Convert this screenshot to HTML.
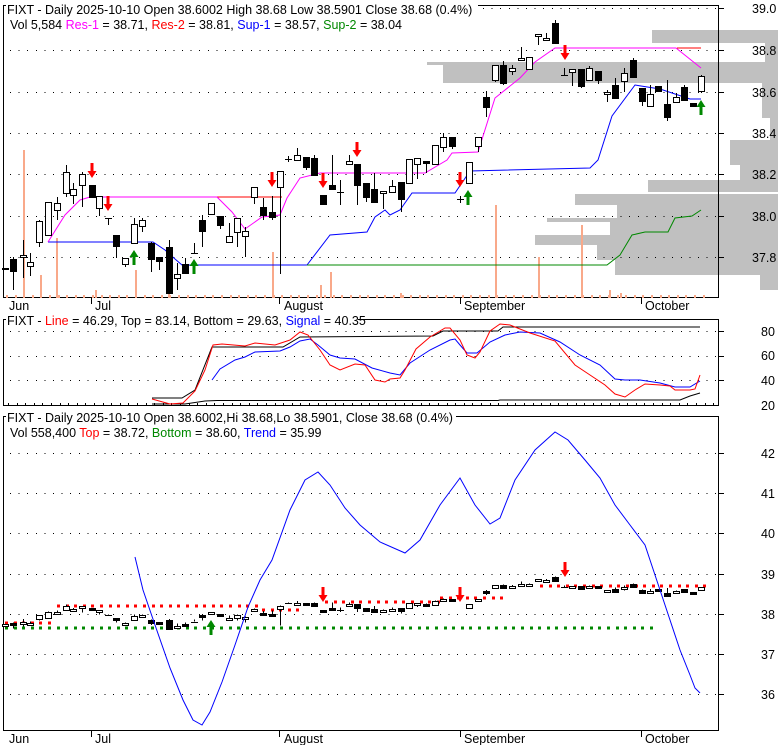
<!DOCTYPE html>
<html><head><meta charset="utf-8"><style>
body{margin:0;background:#fff;width:780px;height:745px;overflow:hidden}
svg{display:block}
text{font-family:"Liberation Sans",Arial,sans-serif;font-size:12.5px}
</style></head><body>
<svg id="s" width="780" height="745" viewBox="0 0 780 745" xmlns="http://www.w3.org/2000/svg" shape-rendering="crispEdges">
<g id="bg"></g>
<!-- frames -->
<rect x="3.5" y="5.5" width="715" height="292" fill="none" stroke="#000"/>
<rect x="3.5" y="319.5" width="715" height="86" fill="none" stroke="#000"/>
<rect x="3.5" y="416.5" width="715" height="314" fill="none" stroke="#000"/>
<g id="g"></g>
<!-- headers -->
<rect x="6" y="0" width="472" height="13" fill="#fff"/>
<text x="7" y="14">FIXT - Daily 2025-10-10 Open 38.6002  High 38.68  Low 38.5901  Close 38.68 (0.4%)</text>
<text x="10" y="29">Vol 5,584 <tspan fill="#f0f">Res-1</tspan> = 38.71, <tspan fill="#f00">Res-2</tspan> = 38.81, <tspan fill="#00f">Sup-1</tspan> = 38.57, <tspan fill="#080">Sup-2</tspan> = 38.04</text>
<rect x="6" y="313" width="352" height="13" fill="#fff"/>
<text x="7" y="325">FIXT - <tspan fill="#f00">Line</tspan> = 46.29, Top = 83.14, Bottom = 29.63, <tspan fill="#00f">Signal</tspan> = 40.35</text>
<rect x="6" y="410" width="450" height="13" fill="#fff"/>
<text x="7" y="422">FIXT - Daily 2025-10-10 Open 38.6002,Hi 38.68,Lo 38.5901, Close 38.68 (0.4%)</text>
<text x="10" y="437">Vol 558,400 <tspan fill="#f00">Top</tspan> = 38.72, <tspan fill="#080">Bottom</tspan> = 38.60, <tspan fill="#00f">Trend</tspan> = 35.99</text>
<!-- axis labels -->
<g font-size="12.5">
<text x="752" y="13">39.0</text><text x="752" y="55">38.8</text><text x="752" y="97">38.6</text><text x="752" y="138">38.4</text><text x="752" y="179">38.2</text><text x="752" y="221">38.0</text><text x="752" y="262">37.8</text>
<text x="761" y="336">80</text><text x="761" y="360">60</text><text x="761" y="385">40</text><text x="761" y="410">20</text>
<text x="761" y="458">42</text><text x="761" y="498">41</text><text x="761" y="538">40</text><text x="761" y="579">39</text><text x="761" y="619">38</text><text x="761" y="659">37</text><text x="761" y="699">36</text>
<text x="9" y="310">Jun</text><text x="95" y="310">Jul</text><text x="284" y="310">August</text><text x="464" y="310">September</text><text x="645" y="310">October</text>
<text x="9" y="743">Jun</text><text x="95" y="743">Jul</text><text x="284" y="743">August</text><text x="464" y="743">September</text><text x="645" y="743">October</text>
</g>
</svg>
<script>
var NS="http://www.w3.org/2000/svg",G=document.getElementById('g'),B=document.getElementById('bg');
function el(p,t,a){var e=document.createElementNS(NS,t);for(var k in a)e.setAttribute(k,a[k]);p.appendChild(e);return e;}
// volume profile
[[30,43,652],[43,62,765],[62,65,427],[65,83,443],[83,118,762],[118,140,770],[140,165,730],[165,180,740],[180,192,648],[194,205,575],[205,218,617],[218,222,547],[222,235,610],[235,245,535],[245,260,597],[260,275,615],[275,290,760]].forEach(function(r){el(B,'rect',{x:r[2],y:r[0],width:778-r[2],height:r[1]-r[0],fill:'#c0c0c0'});});
// grids
function grid(ys){ys.forEach(function(y){el(G,'line',{x1:10,x2:719,y1:y+.5,y2:y+.5,stroke:'#000','stroke-dasharray':'1 7.6'});el(G,'line',{x1:719,x2:724,y1:y+.5,y2:y+.5,stroke:'#000'});});}
grid([8,50,92,133,174,216,257]);grid([331,356,380]);grid([453,493,533,574,614,654,694]);
[91,279,460,641].forEach(function(x){el(G,'line',{x1:x+.5,x2:x+.5,y1:298,y2:304,stroke:'#000'});el(G,'line',{x1:x+.5,x2:x+.5,y1:731,y2:737,stroke:'#000'});});
for(var x=8;x<719;x+=8.6){el(G,'line',{x1:Math.round(x)+.5,x2:Math.round(x)+.5,y1:403,y2:405,stroke:'#000'});}
// volume
var vol=[[23,150],[56,238],[40,275],[135,270],[272,252],[330,272],[495,205],[538,257],[581,225],[95,290],[168,287],[320,285],[400,293],[609,290],[620,293]];
for(var x=6;x<705;x+=8.6)el(G,'rect',{x:Math.round(x),y:295,width:2,height:3,fill:'#f9a98a'});
vol.forEach(function(v){el(G,'rect',{x:v[0],y:v[1],width:2,height:298-v[1],fill:'#f9a98a'});});
function pl(pts,c,w){el(G,'polyline',{points:pts.map(function(p){return p.join(',')}).join(' '),fill:'none',stroke:c,'stroke-width':w||1,'shape-rendering':'auto'});}
// panel1 lines
pl([[48,242],[153,242],[165,250],[175,259],[182,265],[307,265]],'#00f');
pl([[307,265],[330,235],[367,232],[375,217],[385,210],[390,215],[400,210],[412,193],[455,193],[470,171],[590,168],[598,160],[612,116],[635,85],[641,86],[660,89],[690,99],[701,99]],'#00f');
pl([[48,242],[65,215],[80,200],[90,197],[217,197]],'#f0f');
pl([[217,197],[282,197]],'#f00');
pl([[217,197],[232,212],[245,229],[262,217],[280,215],[287,198],[300,178],[320,173],[425,173],[447,160],[452,153],[478,152],[495,98],[520,78],[535,62],[555,48],[676,48],[701,68]],'#f0f');
pl([[677,48],[701,48]],'#f00');
pl([[307,265],[607,265],[620,255],[632,235],[645,232],[668,232],[675,218],[692,216],[701,210]],'#080');
// candles
var C=[[5,268,268,268,268,0],[13,259,271,257,290,1],[23,255,257,240,278,0],[30,262,266,253,276,0],[39,221,242,220,247,0],[48,202,235,202,235,0],[57,203,210,197,220,0],[66,172,193,165,197,0],[73,189,195,183,204,0],[82,174,185,172,207,0],[92,185,197,185,197,1],[99,196,208,196,216,0],[108,218,218,218,225,2],[116,235,246,235,258,1],[125,258,264,258,267,0],[134,224,243,218,243,0],[142,220,226,218,232,0],[151,243,259,242,272,1],[159,257,261,257,270,1],[169,247,293,240,293,1],[177,274,278,263,290,0],[185,264,273,258,273,1],[194,253,253,243,253,2],[202,220,231,215,247,1],[211,203,214,203,214,0],[220,216,225,216,229,1],[229,236,242,223,242,0],[237,218,232,218,247,0],[245,231,236,227,257,0],[254,187,197,187,204,0],[263,207,215,198,220,1],[272,212,217,196,220,1],[280,171,187,171,274,0],[288,159,159,156,162,2],[297,155,160,148,160,0],[306,157,167,157,170,1],[314,158,175,155,175,1],[323,195,204,195,204,1],[332,185,189,155,189,1],[340,192,192,180,205,2],[349,161,164,155,164,0],[357,164,185,164,205,1],[366,183,197,183,202,1],[374,189,202,173,202,1],[383,191,193,191,209,0],[392,186,192,180,192,0],[401,182,199,182,212,1],[409,159,183,159,183,0],[417,158,164,158,179,0],[426,161,163,161,173,1],[435,145,164,145,164,0],[443,137,147,133,152,0],[452,137,146,137,149,1],[469,162,183,162,183,0],[478,137,146,137,152,0],[486,97,107,91,117,1],[495,65,80,65,82,0],[503,65,83,61,85,1],[512,68,71,65,75,0],[521,58,60,47,60,0],[529,57,69,57,69,0],[538,34,36,34,45,0],[546,38,40,33,40,0],[555,23,43,20,43,1],[564,75,75,68,75,2],[572,69,72,69,86,0],[581,69,86,69,88,1],[589,68,80,66,80,0],[598,71,80,71,84,1],[607,92,94,90,102,0],[615,85,98,78,98,1],[624,73,81,68,92,0],[633,60,77,58,77,1],[642,88,101,88,106,1],[650,94,106,85,106,0],[658,86,91,86,91,1],[667,104,117,80,121,1],[676,97,102,93,102,0],[684,87,100,85,100,1],[693,103,106,103,106,1],[701,76,91,75,93,0]];
function candle(c,f,off){var x=c[0];var y=function(v){return f(v)};var t=y(c[1]),b=y(c[2]),h=y(c[3]),l=y(c[4]);
 el(G,'line',{x1:x+.5,x2:x+.5,y1:h,y2:l,stroke:'#000'});
 if(c[5]==2){el(G,'line',{x1:x-3,x2:x+4,y1:Math.round(t)+.5,y2:Math.round(t)+.5,stroke:'#000'});return;}
 var hh=Math.max(b-t,off?2:1);
 el(G,'rect',{x:x-2.5,y:Math.round(t)+.5,width:6,height:Math.max(Math.round(hh),1),fill:c[5]?'#000':'#fff',stroke:'#000'});}
C.forEach(function(c){candle(c,function(v){return v});});
// plus sign
el(G,'path',{d:'M457 199.5h7M460.5 196v7',stroke:'#000'});
// arrows
function arr(x,y,dn,col){var d=dn?'M'+(x-1.5)+' '+y+'h3v8h3l-4.5 7l-4.5-7h3z':'M'+(x-1.5)+' '+(y+15)+'h3v-8h3l-4.5-7l-4.5 7h3z';el(G,'path',{d:d,fill:col,'shape-rendering':'auto'});}
[[92,163],[108,196],[272,172],[323,173],[357,142],[460,172],[565,45]].forEach(function(a){arr(a[0],a[1],1,'#f00')});
[[134,250],[194,259],[468,190],[701,100]].forEach(function(a){arr(a[0],a[1],0,'#080')});
// panel2
pl([[152,398],[182,398],[195,390],[212,347],[283,347],[300,337],[433,336],[443,331],[498,331],[503,327],[700,327]],'#000');
pl([[152,404],[185,404],[205,401],[217,400.5],[498,400.5],[500,400],[680,400],[690,396],[700,393]],'#000');
pl([[212,380],[220,369],[235,360],[245,357],[255,352],[280,351],[290,347],[300,341],[310,339],[318,345],[330,355],[340,358],[355,359],[372,368],[390,373],[400,375],[410,363],[430,350],[450,340],[455,339],[460,345],[467,353],[477,353],[490,342],[505,335],[520,332],[540,333],[560,342],[580,355],[600,365],[615,379],[625,380],[640,380],[660,383],[675,387],[690,387],[700,381]],'#00f');
pl([[152,399],[170,404],[183,403],[195,391],[205,370],[213,345],[222,344],[245,346],[255,343],[275,345],[290,340],[300,332],[308,335],[320,350],[330,365],[340,370],[355,364],[365,365],[375,380],[385,382],[390,379],[400,378],[405,370],[416,349],[430,337],[445,328],[450,328],[460,340],[467,355],[475,358],[480,352],[490,331],[500,324],[510,325],[530,333],[555,341],[575,365],[590,375],[605,385],[615,394],[625,397],[635,390],[645,384],[660,385],[670,386],[675,390],[690,390],[695,389],[700,375]],'#f00');
// panel3
function dots(x1,x2,y,col){for(var x=x1;x<=x2;x+=8.6)el(G,'rect',{x:Math.round(x),y:y-1.5,width:3,height:3,fill:col});}
dots(5,655,628,'#080');dots(540,705,586,'#080');
dots(5,50,623,'#f00');dots(57,255,606,'#f00');dots(262,300,610,'#f00');dots(325,445,602,'#f00');dots(440,505,598,'#f00');dots(540,705,586,'#f00');
C.forEach(function(c){candle(c,function(v){return 574+(v-8)*0.194},1);});
pl([[135,557],[143,590],[155,625],[170,668],[183,700],[193,720],[202,725],[210,712],[222,682],[235,645],[248,607],[260,580],[272,560],[290,510],[305,480],[318,472],[330,485],[345,508],[360,525],[380,542],[405,553],[420,540],[440,505],[460,478],[475,505],[490,524],[500,518],[515,480],[535,450],[555,432],[568,440],[585,460],[600,478],[615,505],[630,525],[645,545],[655,575],[665,605],[680,650],[690,675],[695,688],[700,693]],'#00f');
arr(323,587,1,'#f00');arr(460,587,1,'#f00');arr(565,562,1,'#f00');arr(211,620,0,'#080');
</script>
</body></html>
